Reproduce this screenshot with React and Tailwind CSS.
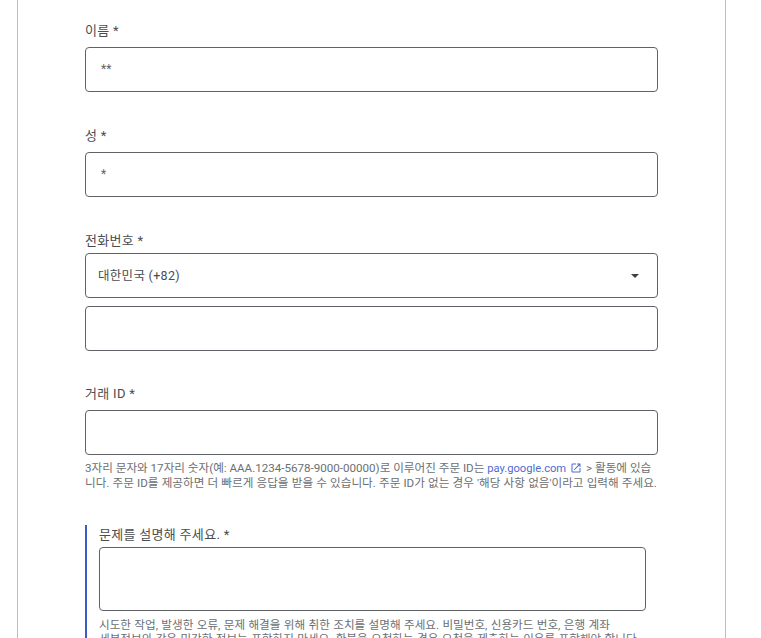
const font = { fontFamily: '"Roboto", "Noto Sans CJK KR", sans-serif' }

// 입력 상자
function Box({ className = '', children }) {
  return (
    <div className={`flex h-[45px] w-[573px] items-center rounded-[4px] border border-[#5f6368] bg-white ${className}`}>
      {children}
    </div>
  )
}

function Label({ children, className = '' }) {
  return <div className={`text-[13px] leading-[18px] tracking-[0.3px] text-[#4a4d50] ${className}`}>{children}</div>
}

function Field({ label, value, className = '' }) {
  return (
    <div className={className}>
      <Label className="mb-[7px]">{label}</Label>
      <Box>
        <span className="pb-[2px] pl-[15px] text-[12px] text-[#5f6368]">{value}</span>
      </Box>
    </div>
  )
}

function OpenInNew() {
  return (
    <svg viewBox="0 0 24 24" className="ml-[4px] mr-[1px] inline-block h-[12px] w-[12px] align-[-2px] fill-[#4f6bd0]">
      <path d="M19 19H5V5h7V3H5a2 2 0 0 0-2 2v14a2 2 0 0 0 2 2h14c1.1 0 2-.9 2-2v-7h-2v7zM14 3v2h3.59l-9.83 9.83 1.41 1.41L19 6.41V10h2V3h-7z" />
    </svg>
  )
}

export default function App() {
  return (
    <div className="h-[638px] w-[761px] overflow-hidden bg-white" style={font}>
      <div className="ml-[17px] h-[638px] w-[709px] border-x border-[#bdbdbd] pl-[67px] pt-[22px]">
        <Field label="이름 *" value="**" />
        <Field label="성 *" value="*" className="mt-[35px]" />

        <div className="mt-[35px]">
          <Label className="mb-[3px]">전화번호 *</Label>
          <Box className="justify-between pl-[12px] pr-[18px]">
            <span className="pt-[1px] text-[12.5px] tracking-[0.3px] text-[#4a4d50]">대한민국 (+82)</span>
            <span className="h-0 w-0 border-x-[4px] border-t-[4px] border-x-transparent border-t-[#3c4043]" />
          </Box>
          <Box className="mt-[8px]" />
        </div>

        <div className="mt-[34px]">
          <Label className="mb-[7px]">거래 ID *</Label>
          <Box />
          <p className="mt-[6px] w-[580px] whitespace-nowrap text-[11.6px] leading-[14px] text-[#6b6f73]">
            3자리 문자와 17자리 숫자(예: AAA.1234-5678-9000-00000)로 이루어진 주문 ID는{' '}
            <span className="text-[11.2px] text-[#4f6bd0]">pay.google.com</span>
            <OpenInNew />
            {' '}&gt; 활동에 있습
            <br />
            <span className="[word-spacing:0.3px]">
              니다. 주문 ID를 제공하면 더 빠르게 응답을 받을 수 있습니다. 주문 ID가 없는 경우 '해당 사항 없음'이라고 입력해 주세요.
            </span>
          </p>
        </div>

        <div className="mt-[35px] h-[160px] border-l-2 border-[#3b5bc7] pl-[12px] pt-[1px]">
          <Label className="mb-[3px]">문제를 설명해 주세요. *</Label>
          <div className="h-[64px] w-[547px] rounded-[4px] border border-[#5f6368] bg-white" />
          <p className="mt-[7px] w-[560px] whitespace-nowrap text-[11.6px] leading-[14px] text-[#6b6f73] [word-spacing:0.5px]">
            시도한 작업, 발생한 오류, 문제 해결을 위해 취한 조치를 설명해 주세요. 비밀번호, 신용카드 번호, 은행 계좌
            <br />
            세부정보와 같은 민감한 정보는 포함하지 마세요. 환불을 요청하는 경우 요청을 제출하는 이유를 포함해야 합니다.
          </p>
        </div>
      </div>
    </div>
  )
}
